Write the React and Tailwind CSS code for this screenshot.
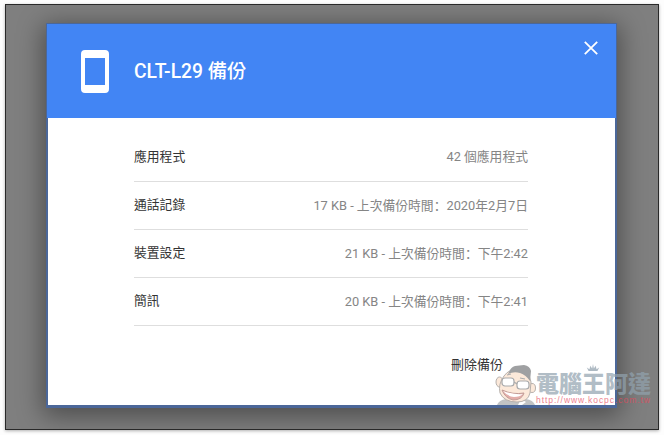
const ROWS = [
  { label: "應用程式", value: "42 個應用程式" },
  { label: "通話記錄", size: "17 KB", time: "2020年2月7日" },
  { label: "裝置設定", size: "21 KB", time: "下午2:42" },
  { label: "簡訊", size: "20 KB", time: "下午2:41" },
];

export default function App() {
  return (
    <div className="h-[435px] w-[664px] overflow-hidden bg-[#fdfdfd] pl-[5px] pt-1 font-[Roboto,'Noto_Sans_CJK_TC',sans-serif]">
      <div className="relative h-[426px] w-[654px] overflow-hidden border border-[#292929] bg-[#7f7f7f] pl-10 pt-[18px] shadow-[0_1px_3px_rgba(0,0,0,0.3)]">
        <BackupDialog />
        <Watermark />
      </div>
    </div>
  );
}

function BackupDialog() {
  return (
    <div className="flex h-[385px] w-[571px] flex-col border-x-2 border-b-3 border-t border-[#4b6799] bg-white shadow-[0_5px_24px_3px_rgba(0,0,0,0.4)]">
      <header className="-mx-px flex h-[94px] shrink-0 bg-[#4285f4] pl-[34px] pr-[18px] text-white">
        <PhoneIcon />
        <h1 className="ml-[25px] mt-[35px] flex-1 whitespace-nowrap text-[19.3px] font-medium leading-[26px]">
          CLT-L29 備份
        </h1>
        <CloseIcon />
      </header>
      <div className="ml-[86px] mt-4 w-[394px]">
        {ROWS.map((row) => (
          <Row key={row.label} row={row} />
        ))}
      </div>
      <div className="ml-[403px] mt-[30px] text-[13px] leading-[18px] text-[#333]">
        刪除備份
      </div>
    </div>
  );
}

function Row({ row }) {
  return (
    <div className="flex h-12 items-center justify-between whitespace-nowrap border-b border-[#dedede] pb-px text-[12.8px]">
      <span className="text-[#333]">{row.label}</span>
      <span className="text-[#858585]">
        {row.value ?? (
          <>
            {row.size} - 上次備份時間
            <span className="font-['Noto_Sans_CJK_SC',sans-serif]">：</span>
            {row.time}
          </>
        )}
      </span>
    </div>
  );
}

function PhoneIcon() {
  return (
    <svg className="mt-[26px] h-[43px] w-7" viewBox="0 0 28 43" fill="currentColor">
      <path
        fillRule="evenodd"
        d="M4 0h20a4 4 0 0 1 4 4v35a4 4 0 0 1-4 4H4a4 4 0 0 1-4-4V4a4 4 0 0 1 4-4Zm0 8v27h20V8Z"
      />
    </svg>
  );
}

function CloseIcon() {
  return (
    <svg
      className="mt-[17px] h-[14px] w-[14px]"
      viewBox="0 0 14 14"
      stroke="currentColor"
      strokeWidth="1.8"
    >
      <path d="M.8.8l12.4 12.4M13.2.8L.8 13.2" />
    </svg>
  );
}

// Site mark laid over the lower right corner of the dialog.
function Watermark() {
  return (
    <div className="absolute left-[489px] top-[359px] flex opacity-70">
      <Mascot />
      <div className="relative -ml-px pt-[5px] font-['Noto_Sans_CJK_TC',sans-serif]">
        <svg
          className="absolute left-[49px] top-0 h-[8px] w-[16px]"
          viewBox="0 0 16 9"
          fill="#8d9dab"
        >
          <path d="M3 8 1 4l3 2 1-4 2 3 1-5 1 5 2-3 1 4 3-2-2 4Z" />
        </svg>
        <div className="whitespace-nowrap text-[23px] font-black leading-[26px] text-[#91a2ae]">
          電腦王阿達
        </div>
        <div className="mt-px whitespace-nowrap font-['Liberation_Sans',sans-serif] text-[8.5px] leading-[9px] tracking-[0.95px] text-[#e8485d]">
          http://www.kocpc.com.tw
        </div>
      </div>
    </div>
  );
}

function Mascot() {
  return (
    <svg className="h-[42px] w-[42px]" viewBox="0 0 42 42" fill="none">
      <path d="M2 41q2-5 9-6h20q7 1 9 6Z" fill="#a7aaac" />
      <path d="M26 35l5 3-4 3h-4Z" fill="#fff" />
      <ellipse cx="4.500" cy="18" rx="3.500" ry="5" fill="#fbe0cb" stroke="#98908a" />
      <ellipse cx="37" cy="24" rx="3.500" ry="4.500" fill="#fbe0cb" stroke="#98908a" />
      <path
        d="M9 12Q14 5 23 5q11 1 13 13l-1 11q-2 9-13 9Q9 38 5 29q-2-9 4-17Z"
        fill="#fbe0cb"
        stroke="#98908a"
      />
      <path
        d="M14 8q2-5 6-6l9-1q6 1 7 6l-1 10q-4-6-10-8-6-2-12 1Z"
        fill="#77797b"
      />
      <g stroke="#858789" strokeWidth="1.2">
        <rect x="7" y="14" width="12" height="8" rx="3" fill="#fff" />
        <rect x="22" y="17" width="12" height="8" rx="3" fill="#fff" />
        <path d="m19 18 3 2M12 11l4-1M25 14l5 1" />
      </g>
      <path d="M7 26q11 5 22 3-2 7-11 7-8-2-11-10Z" fill="#d88b86" stroke="#a8736b" />
      <path d="M8 27q11 4 20 3-3 3-9 3-7-1-11-6Z" fill="#fff" />
    </svg>
  );
}
